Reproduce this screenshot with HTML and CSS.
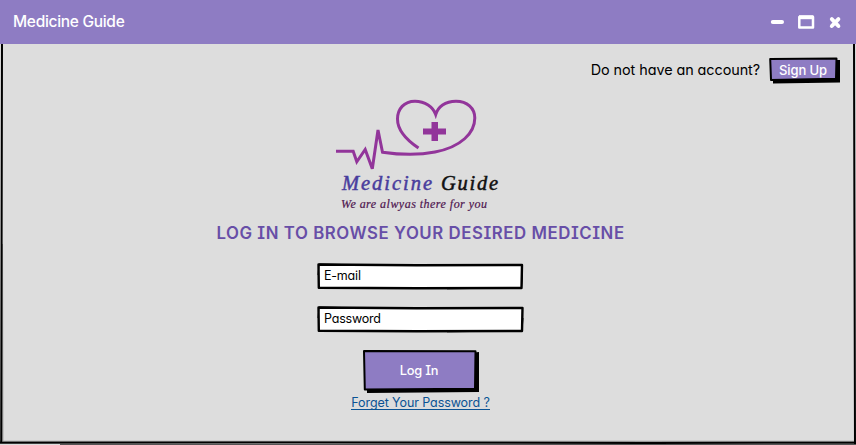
FILE: index.html
```html
<!DOCTYPE html>
<html lang="en">
<head>
<meta charset="utf-8">
<title>Medicine Guide</title>
<link rel="stylesheet" href="styles.css">
</head>
<body>
<div class="window">
  <header class="titlebar">
    <h1 class="title">Medicine Guide</h1>
    <svg class="controls" width="72" height="16" viewBox="770 14 72 16">
      <path d="M772.8 22H782" stroke-width="4" stroke-linecap="round"/>
      <path d="M799.3 17V27.6H813V17Z" stroke-width="2.5"/><path d="M799 17.2H813.4" stroke-width="4"/>
      <path d="M831.8 19.1L838.4 26M838.4 19.1L831.8 26" stroke-width="3.9" stroke-linecap="round"/>
    </svg>
  </header>
  <main class="content">
    <div class="signup">
      <span class="question">Do not have an account?</span>
      <button class="btn btn-small">
        <svg class="sketch" viewBox="0 0 71 27"><path class="shadow" d="M4 22L67 22V3L71 3V25.5L4 26.5Z"/><path class="face" d="M1.2 2L67.5 1.4L67 21.8L2 23Z"/></svg>
        <span class="label">Sign Up</span>
      </button>
    </div>
    <svg class="logo" width="180" height="120" viewBox="330 95 180 120">
      <path class="pulse" d="M336 151.3H353.2L356.8 161.8L365.2 149.5L372.3 168.8L378 130L382.5 152.2C398 154.5 418 155.5 435 152C461 147 474.8 133 474.8 118C474.8 108 467 101.2 456 101.2C445 101.2 438 107 435.7 114.5C433 107 425 101.2 415 101.2C404 101.2 397.5 109 397.5 119C397.5 130 405 139 418.5 148"/>
      <path class="cross" d="M431.5 122H438V128.5H446V134.5H438V141H431.5V134.5H423V128.5H431.5Z"/>
      <text class="brand" x="342" y="190" textLength="90">Medicine</text>
      <text class="brand brand-dark" x="441" y="190" textLength="57">Guide</text>
      <text class="tagline" x="341" y="208" textLength="146">We are alwyas there for you</text>
    </svg>
    <h2 class="heading">LOG IN TO BROWSE YOUR DESIRED MEDICINE</h2>
    <form class="form">
      <label class="field">
        <svg class="sketch" viewBox="0 0 207 27"><path class="box" d="M1.5 1.5L100 2.2L205 2L204.5 25L100 25.2L1.8 24.8Z"/><path class="rough" d="M1 12L2 1L70 2.5M130 25.8L204.5 24.8L205.5 12"/></svg>
        <span class="label">E-mail</span>
      </label>
      <label class="field">
        <svg class="sketch" viewBox="0 0 207 27"><path class="box" d="M1.5 1.5L100 2.2L205.5 2L205 25L100 25.2L1.8 24.8Z"/><path class="rough" d="M1 12L2 1L70 2.5M130 25.8L205 24.8L206 12"/></svg>
        <span class="label">Password</span>
      </label>
      <button class="btn btn-large" type="button">
        <svg class="sketch" viewBox="0 0 116 43"><path class="shadow" d="M4 39L111 39V2.5L116 2V42L4 43Z"/><path class="face" d="M1 1L112.5 1.2L112 38.8L1.8 39.5Z"/></svg>
        <span class="label">Log In</span>
      </button>
      <a class="forgot">Forget Your Password ?</a>
    </form>
  </main>
  <svg class="frame" viewBox="0 0 856 401">
    <path class="frame-halo" d="M2 200L2.4 398M0 397.8H854"/>
    <path class="frame-line" d="M2 0L1.2 398.5M0 398.8L300 398.5L650 399L856 398.7M854 0L855 400"/>
    <path class="frame-edge" d="M60 400.5H856"/>
  </svg>
</div>
</body>
</html>
```
FILE: styles.css
```css
* { box-sizing: border-box; }
body {
  margin: 0;
  font-family: Inter, "Open Sans", sans-serif;
  font-feature-settings: "cv11", "cv08";
  color: #000;
}
.window {
  position: relative;
  display: flex;
  flex-direction: column;
  width: 856px;
  height: 445px;
  background: #ddd;
  overflow: hidden;
}
.titlebar {
  display: flex;
  align-items: center;
  justify-content: space-between;
  height: 44px;
  padding: 0 14px 1px 13px;
  background: #8e7cc3;
}
.title {
  margin: 0;
  font-size: 15.5px;
  font-weight: 500;
  letter-spacing: -0.3px;
  color: #fff;
}
.controls { fill: none; stroke: #fff; stroke-linejoin: round; }
.content {
  display: flex;
  flex-direction: column;
  align-items: center;
  flex: 1;
}
.signup {
  display: flex;
  align-self: flex-end;
  align-items: center;
  gap: 9px;
  height: 27px;
  margin: 13px 16px 0 0;
}
.question { font-size: 14.4px; line-height: 27px; letter-spacing: -0.07px; padding-bottom: 2px; }
.btn {
  position: relative;
  padding: 0;
  border: 0;
  background: none;
  font: inherit;
  font-weight: 500;
  color: #fff;
}
.btn-small { width: 71px; height: 27px; font-size: 13px; }
.btn-large { width: 116px; height: 43px; font-size: 12.8px; letter-spacing: -0.2px; }
.sketch { position: absolute; top: 0; left: 0; width: 100%; height: 100%; }
.shadow { fill: #000; }
.face { fill: #8e7cc3; stroke: #000; stroke-width: 2; stroke-linejoin: round; }
.label { position: relative; display: block; }
.btn-small .label { padding-right: 3px; line-height: 25px; letter-spacing: -0.1px; }
.btn-large .label { padding: 0 3px 2px 0; line-height: 41px; }
.logo { display: block; margin: 11px 0 0 -16px; }
.pulse { fill: none; stroke: #92359a; stroke-width: 3; }
.cross { fill: #92359a; }
.brand {
  font-family: "Liberation Serif", serif;
  font-style: italic;
  font-size: 20.5px;
  fill: #493d9d;
  stroke: #493d9d;
  stroke-width: 0.5;
}
.brand-dark { fill: #111; stroke: #111; }
.tagline {
  font-family: "Liberation Serif", serif;
  font-style: italic;
  font-size: 12px;
  fill: #4e164f;
  stroke: #4e164f;
  stroke-width: 0.2;
}
.heading {
  margin: 7px 0 0 -15px;
  font-size: 16.8px;
  line-height: 22px;
  font-weight: 600;
  letter-spacing: 0.56px;
  color: #674ea7;
  white-space: nowrap;
}
.form {
  display: flex;
  flex-direction: column;
  align-items: center;
  width: 207px;
  margin: 19px 0 0 -15px;
}
.field {
  position: relative;
  width: 207px;
  height: 27px;
  margin-bottom: 16px;
  padding-left: 7px;
  font-size: 12.5px;
  line-height: 25px;
  letter-spacing: -0.2px;
}
.field + .btn { margin-top: 1px; }
.box { fill: #fff; stroke: #000; stroke-width: 2.4; stroke-linejoin: round; }
.rough { fill: none; stroke: #000; stroke-width: 1; }
.forgot {
  margin-top: 3px;
  font-size: 12.5px;
  line-height: 13px;
  letter-spacing: -0.09px;
  border-bottom: 1px solid #0b5394;
  color: #0b5394;
  white-space: nowrap;
}
.frame {
  position: absolute;
  top: 44px;
  left: 0;
  width: 856px;
  height: 401px;
  fill: none;
  pointer-events: none;
}
.frame-line { stroke: #000; stroke-width: 2; }
.frame-halo { stroke: #999; stroke-width: 2; }
.frame-edge { stroke: #555; stroke-width: 1; }
```
